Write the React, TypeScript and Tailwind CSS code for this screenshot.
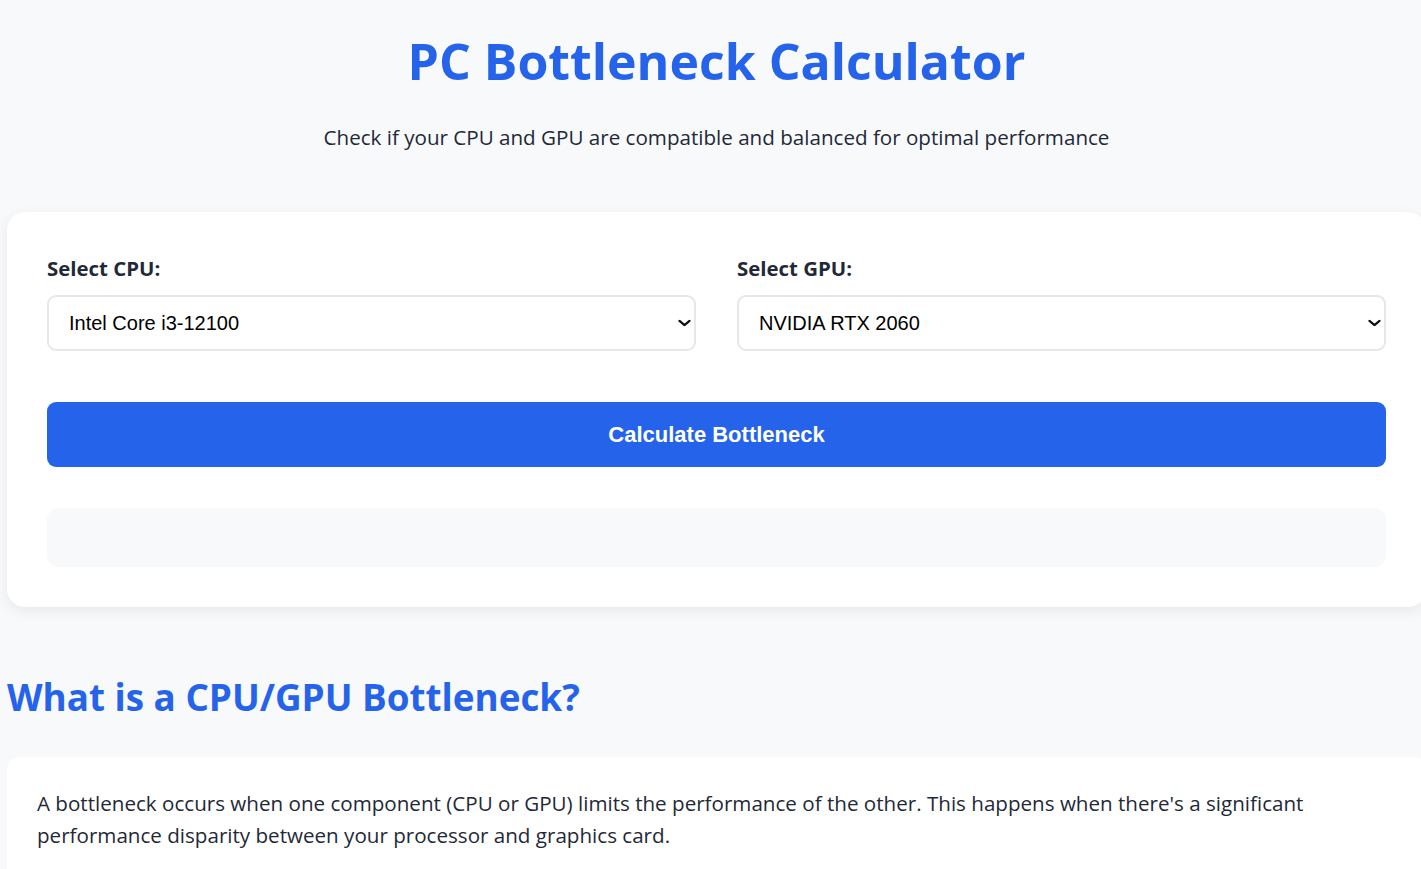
import React, { useState } from 'react';

const cpus = ['Intel Core i3-12100', 'Intel Core i5-12400F', 'Intel Core i7-12700K', 'AMD Ryzen 5 5600X', 'AMD Ryzen 7 5800X3D'];
const gpus = ['NVIDIA RTX 2060', 'NVIDIA RTX 3060', 'NVIDIA RTX 4070', 'AMD Radeon RX 6600', 'AMD Radeon RX 7800 XT'];

interface PickerProps {
    label: string;
    value: string;
    options: string[];
    onChange: (v: string) => void;
}

const Picker: React.FC<PickerProps> = ({ label, value, options, onChange }) => (
    <div>
        <label className="block text-[20.4px] leading-[32px] font-bold">{label}</label>
        <div className="relative mt-[11px]">
            <select
                value={value}
                onChange={e => onChange(e.target.value)}
                className="block h-[56px] w-full appearance-none rounded-[9px] border-2 border-[#e5e7eb] bg-white pl-[20px] pr-[30px] font-['Liberation_Sans',Arial,sans-serif] text-[20px] text-black"
            >
                {options.map(o => <option key={o}>{o}</option>)}
            </select>
            <svg className="pointer-events-none absolute right-[5px] top-1/2 -translate-y-1/2" width="13" height="7" viewBox="0 0 13 7" fill="none">
                <path d="M1.5 1.3 L6.5 5.6 L11.5 1.3" stroke="#111" strokeWidth="2.2" strokeLinecap="round" strokeLinejoin="round" />
            </svg>
        </div>
    </div>
);

const App: React.FC = () => {
    const [cpu, setCpu] = useState(cpus[0]);
    const [gpu, setGpu] = useState(gpus[0]);

    return (
        <div className="min-h-screen overflow-hidden bg-[#f8f9fb] font-['Open_Sans',sans-serif] text-[#1f2937]">
            <main className="ml-[7px] w-[1419px]">
                <header className="pt-[26px] text-center">
                    <h1 className="text-[50px] leading-[70px] font-bold text-[#2563eb]">PC Bottleneck Calculator</h1>
                    <p className="mt-[27px] text-[20.6px] leading-[28px]">Check if your CPU and GPU are compatible and balanced for optimal performance</p>
                </header>

                <section className="mt-[61px] rounded-[18px] bg-white px-[40px] pt-[40px] pb-[40px] shadow-[0_4px_14px_rgba(0,0,0,0.07)]">
                    <div className="grid grid-cols-2 gap-[41px]">
                        <Picker label="Select CPU:" value={cpu} options={cpus} onChange={setCpu} />
                        <Picker label="Select GPU:" value={gpu} options={gpus} onChange={setGpu} />
                    </div>

                    <button className="mt-[51px] h-[65px] w-full rounded-[9px] bg-[#2563eb] font-['Liberation_Sans',Arial,sans-serif] text-[22px] font-bold text-white">
                        Calculate Bottleneck
                    </button>

                    <div className="mt-[41px] h-[59px] rounded-[12px] bg-[#f8f9fb]"></div>
                </section>

                <h2 className="mt-[62px] text-[36.8px] leading-[56px] font-bold text-[#2563eb]">What is a CPU/GPU Bottleneck?</h2>

                <section className="mt-[32px] rounded-t-[12px] bg-white px-[30px] pt-[30px] pb-[30px]">
                    <p className="text-[20.6px] leading-[32px] text-[#1f2937]">
                        A bottleneck occurs when one component (CPU or GPU) limits the performance of the other. This happens when there's a significant performance disparity between your processor and graphics card.
                    </p>
                </section>
            </main>
        </div>
    );
};

export default App;
